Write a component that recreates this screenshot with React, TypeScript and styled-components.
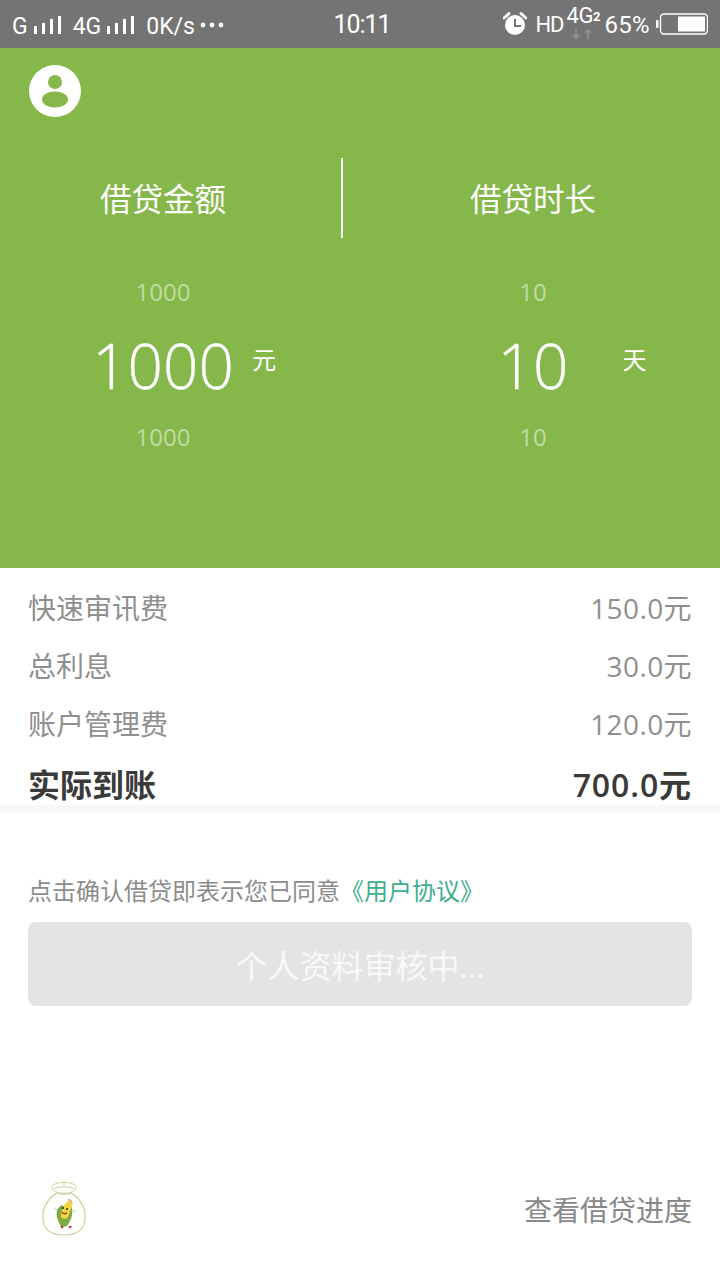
import React from "react";
import styled, { createGlobalStyle } from "styled-components";

const Global = createGlobalStyle`
  html, body { margin: 0; padding: 0; background: #fff; }
  body { font-family: "Open Sans", "Noto Sans CJK SC", "Liberation Sans", sans-serif; }
  * { box-sizing: border-box; }
`;
const CJK = `"Open Sans", "Noto Sans CJK SC", sans-serif`;

const Page = styled.div`
  width: 720px; height: 1280px; display: flex; flex-direction: column; background: #fff; overflow: hidden;
`;
const StatusBar = styled.div`
  height: 48px; background: #747474; color: #fff; display: flex; align-items: center;
  padding: 3px 12px 0 12px; font-family: "Roboto", sans-serif; flex: none;
`;
const StatusLeft = styled.div`
  display: flex; align-items: center; flex: 1; height: 100%;
`;
const StatusRight = styled.div`
  display: flex; align-items: center; flex: none; height: 100%;
`;
const Clock = styled.div`
  width: 56px; font-size: 25px; letter-spacing: -1px; margin: -3px 117px 0 -5px; flex: none; white-space: nowrap;
`;
const StatusText = styled.span<{ $size?: number; $ml?: number; $sp?: number; $mt?: number }>`
  font-size: ${(p) => p.$size ?? 23}px; margin-left: ${(p) => p.$ml ?? 0}px; margin-top: ${(p) => p.$mt ?? 1}px;
  line-height: 1; white-space: nowrap; letter-spacing: ${(p) => p.$sp ?? 0}px;
`;
const NetStack = styled.div`
  display: flex; flex-direction: column; align-items: flex-start; margin: -6px 0 0 3px; width: 37px; height: 38px;
  font-size: 22px; line-height: 24px; letter-spacing: -0.5px;
  sub { font-size: 13px; line-height: 0; vertical-align: 2px; bottom: 0; font-weight: 700; }
`;

const Hero = styled.section`
  height: 520px; background: #85b74a; display: flex; flex-direction: column; flex: none;
`;
const Avatar = styled.div`
  margin: 17px 0 0 29px; width: 52px; height: 52px; border-radius: 50%; background: #fff; display: flex;
  align-items: center; justify-content: center; flex: none;
`;
const Column = styled.div`
  display: flex; flex-direction: column; align-items: center;
`;
const Label = styled.div`
  height: 80px; line-height: 82px; font-size: 31.5px; color: #fff; font-family: ${CJK}; white-space: nowrap;
`;
const Header = styled.div`
  display: grid; grid-template-columns: 326px 15px 2px 3px 1fr; margin-top: 41px; align-items: start;
`;
const HeaderLine = styled.div`
  width: 2px; height: 80px; background: #fff;
`;
const Faint = styled.div`
  font-size: 24px; line-height: 28px; color: rgba(255,255,255,0.5); font-weight: 400;
`;
const ValueRow = styled.div`
  position: relative; font-size: 62px; line-height: 74px; color: #fff; font-weight: 300; margin: 22px 0 21px;
  -webkit-text-stroke: 0.4px #fff;
`;
const Unit = styled.span<{ $x: number }>`
  position: absolute; left: ${(p) => p.$x}px; top: 17px; font-size: 24px; line-height: 30px; font-weight: 400; font-family: ${CJK};
  -webkit-text-stroke: 0;
`;
const Picker = styled.div`
  display: grid; grid-template-columns: 326px 20px 1fr; margin-top: 40px;
`;

const Fees = styled.section`
  padding: 10px 28px 0; flex: none; height: 245px;
  border-bottom: 8px solid #f8f8f8;
`;
const FeeRow = styled.div`
  display: flex; justify-content: space-between; align-items: center;
  height: 58px; font-size: 28px; color: #8f8f8f; font-family: ${CJK};
`;
const FeeValue = styled.span`
  letter-spacing: 0.4px;
`;
const TotalRow = styled.div`
  display: flex; justify-content: space-between; align-items: center;
  height: 58px; margin-top: 2px; font-size: 32px; color: #3a3a3a; font-family: ${CJK}; font-weight: 600;
`;
const TotalName = styled.span`
  font-weight: 700;
`;
const TotalValue = styled.span`
  letter-spacing: 0.9px;
`;

const Agree = styled.p`
  margin: 61px 28px 0; font-size: 24px; line-height: 34px; color: #8c8c8c; font-family: ${CJK}; white-space: nowrap; height: 34px;
`;
const AgreeLink = styled.span`
  color: #3fae8a;
`;
const Submit = styled.button`
  display: block; margin: 14px 28px 0; width: 664px; height: 84px; border: 0; border-radius: 8px; background: #e4e4e4;
  color: #f8f8f8; font-size: 32px; font-family: ${CJK}; padding: 0;
`;
const Footer = styled.footer`
  display: flex; align-items: center; justify-content: space-between; padding: 0 28px 0 42px; margin-top: 176px;
  height: 54px;
`;
const FooterLink = styled.span`
  color: #888; font-size: 28px; font-family: ${CJK};
`;

const Signal = styled.svg`
  margin-left: 5px; flex: none;
`;
const Bars = () => (
  <Signal width="30" height="20" viewBox="0 0 30 20">
    <rect x="1" y="10" width="3" height="8" fill="#fff" />
    <rect x="9" y="7" width="3" height="11" fill="#fff" />
    <rect x="17" y="3" width="3" height="15" fill="#fff" />
    <rect x="25" y="0" width="3" height="18" fill="#fff" />
  </Signal>
);

const DotsSvg = styled.svg`
  margin: -2px 0 0 5px; flex: none;
`;
const Dots = () => (
  <DotsSvg width="24" height="8" viewBox="0 0 24 8">
    <circle cx="3" cy="4" r="2.4" fill="#fff" />
    <circle cx="12" cy="4" r="2.4" fill="#fff" />
    <circle cx="21" cy="4" r="2.4" fill="#fff" />
  </DotsSvg>
);

const AlarmSvg = styled.svg`
  margin: -3px 8px 0 -3px; flex: none;
`;
const Alarm = () => (
  <AlarmSvg width="24" height="26" viewBox="0 0 24 26">
    <circle cx="12" cy="14" r="10" fill="#fff" />
    <path d="M12 8v7h6" fill="none" stroke="#747474" strokeWidth="2" />
    <path d="M1 7 L6 2.5 M23 7 L18 2.5" stroke="#fff" strokeWidth="3" strokeLinecap="round" />
  </AlarmSvg>
);

const BatterySvg = styled.svg`
  margin: -3px 0 0 6px; flex: none;
`;
const Battery = () => (
  <BatterySvg width="52" height="22" viewBox="0 0 52 22">
    <rect x="0" y="7" width="2.5" height="8" rx="1" fill="#fff" />
    <rect x="4.5" y="1" width="47" height="20" rx="3.5" fill="none" stroke="#fff" strokeWidth="1.4" />
    <rect x="22" y="3.5" width="27" height="15" fill="#fff" />
  </BatterySvg>
);

const Arrows = () => (
  <svg width="30" height="12" viewBox="0 0 30 12">
    <path d="M9 1v9M6 7l3 3 3-3" stroke="#8e8e8e" strokeWidth="2" fill="none" />
    <path d="M21 11V2M18 5l3-3 3 3" stroke="#8e8e8e" strokeWidth="2" fill="none" />
  </svg>
);

const Person = () => (
  <svg width="28" height="36" viewBox="0 0 28 36">
    <circle cx="14" cy="9" r="7" fill="#85b74a" />
    <ellipse cx="14" cy="26.5" rx="13" ry="8" fill="#85b74a" />
  </svg>
);

const Bag = () => (
  <svg width="44" height="54" viewBox="0 0 44 54">
    <path d="M16 11C13 9 10 8 10 5.500C10 2 16 .5 22 .5S34 2 34 5.500C34 8 31 9 28 11z" fill="#fff" stroke="#c6d39c" strokeWidth="1" />
    <path d="M12 6.500c5-2 15-2 20 0M22 .5v3" fill="none" stroke="#c6d39c" strokeWidth="1" />
    <path d="M15 11C7 15 .8 25 .8 35c0 12 8 18 21.200 18s21.200-6 21.200-18C43.200 25 37 15 29 11c-4 1.500-10 1.500-14 0z" fill="#fff" stroke="#c3d094" strokeWidth="1.2" />
    <path d="M15 28c2-3 3-4 5-5l5 4 5-2c1 6 0 12-5 19-4 2-7 0-8-3-2-4-3-8-2-13z" fill="#7dac45" />
    <path d="M28 18c2 2 3 4 2 6l-4 11c-2 3-6 2-7 0 0-7 3-14 9-17z" fill="#f4d53c" />
    <path d="M26 18c1-1 3 0 4 3" stroke="#d8b6a8" strokeWidth="1.800" fill="none" />
    <circle cx="21" cy="26" r="1" fill="#222" />
    <circle cx="25" cy="27" r="1" fill="#222" />
    <path d="M20 30c1 2 3 2 5 1" stroke="#b5322a" strokeWidth="1.400" fill="none" />
    <path d="M12 26l3 2M30 30l4-1" stroke="#dfe4da" strokeWidth="2" />
    <path d="M18 44l2 3 2-3zM26 44l2 3 2-3z" fill="#c2413a" />
  </svg>
);

const fees = [
  ["快速审讯费", "150.0元"],
  ["总利息", "30.0元"],
  ["账户管理费", "120.0元"],
];

export default function App() {
  return (
    <Page>
      <Global />
      <StatusBar>
        <StatusLeft>
          <StatusText>G</StatusText>
          <Bars />
          <StatusText $ml={10}>4G</StatusText>
          <Bars />
          <StatusText $ml={10}>0K/s</StatusText>
          <Dots />
        </StatusLeft>
        <Clock>10:11</Clock>
        <StatusRight>
          <Alarm />
          <StatusText $size={22} $sp={-1} $mt={-2}>HD</StatusText>
          <NetStack>
            <span>4G<sub>2</sub></span>
            <Arrows />
          </NetStack>
          <StatusText $ml={1} $size={24} $mt={-2} $sp={0.3}>65%</StatusText>
          <Battery />
        </StatusRight>
      </StatusBar>
      <Hero>
        <Avatar><Person /></Avatar>
        <Header>
          <Column><Label>借贷金额</Label></Column>
          <span />
          <HeaderLine />
          <span />
          <Column><Label>借贷时长</Label></Column>
        </Header>
        <Picker>
          <Column>
            <Faint>1000</Faint>
            <ValueRow>1000<Unit $x={160}>元</Unit></ValueRow>
            <Faint>1000</Faint>
          </Column>
          <span />
          <Column>
            <Faint>10</Faint>
            <ValueRow>10<Unit $x={125}>天</Unit></ValueRow>
            <Faint>10</Faint>
          </Column>
        </Picker>
      </Hero>
      <Fees>
        {fees.map(([a, b]) => (
          <FeeRow key={a}><span>{a}</span><FeeValue>{b}</FeeValue></FeeRow>
        ))}
        <TotalRow><TotalName>实际到账</TotalName><TotalValue>700.0元</TotalValue></TotalRow>
      </Fees>
      <Agree>点击确认借贷即表示您已同意<AgreeLink>《用户协议》</AgreeLink></Agree>
      <Submit>个人资料审核中...</Submit>
      <Footer>
        <Bag />
        <FooterLink>查看借贷进度</FooterLink>
      </Footer>
    </Page>
  );
}
